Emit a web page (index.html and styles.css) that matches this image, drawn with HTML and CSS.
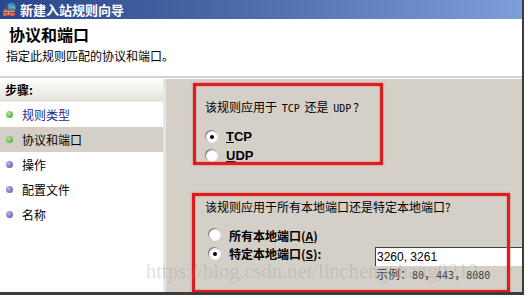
FILE: index.html
```html
<!DOCTYPE html>
<html>
<head>
	<meta charset="UTF-8">
	<title>新建入站规则向导</title>
	<link rel="stylesheet" href="styles.css">
</head>
<body>

<div class="window">

	<div class="titlebar">
		<svg class="appicon" width="15" height="15" viewBox="0 0 15 15">
			<rect x="1" y="7" width="12" height="7" fill="#b0402a"/>
			<path d="M1 9.5h12M1 12h12M4 7v2.5M9 7v2.5M6.5 9.5v2.5M3 12v2M10 12v2" stroke="#e8b090" stroke-width="0.8"/>
			<circle cx="9.5" cy="5" r="4.2" fill="#3a8ad0"/>
			<path d="M6.5 3.5c1.5 0.5 2 2 4 1.5s2 1.5 3 1" stroke="#7cc060" stroke-width="1.4" fill="none"/>
		</svg>
		<span class="title">新建入站规则向导</span>
	</div>

	<div class="header">
		<p class="heading">协议和端口</p>
		<p class="subheading">指定此规则匹配的协议和端口。</p>
	</div>

	<div class="main">

		<div class="steps">
			<div class="stepsTitle">步骤:</div>
			<div class="step"><span class="dot green"></span><span class="link">规则类型</span></div>
			<div class="step current"><span class="dot green"></span>协议和端口</div>
			<div class="step"><span class="dot blue"></span>操作</div>
			<div class="step"><span class="dot blue"></span>配置文件</div>
			<div class="step"><span class="dot blue"></span>名称</div>
		</div>

		<div class="content">

			<p class="question">该规则应用于 <span class="mono">TCP</span> 还是 <span class="mono">UDP</span>?</p>
			<div class="option"><span class="radio checked"></span><b><u>T</u>CP</b></div>
			<div class="option"><span class="radio"></span><b><u>U</u>DP</b></div>

			<p class="question second">该规则应用于所有本地端口还是特定本地端口?</p>
			<div class="option wide"><span class="radio"></span><b>所有本地端口(<u>A</u>)</b></div>
			<div class="option wide portRow">
				<span class="radio checked"></span><b class="portLabel">特定本地端口(<u>S</u>):</b>
				<div class="portField">
					<input type="text" class="portInput" value="3260, 3261">
					<span class="example">示例：<span class="num">80</span>，<span class="num">443</span>，<span class="num">8080</span></span>
				</div>
			</div>

		</div>
	</div>

	<!-- annotation boxes drawn over the dialog -->
	<div class="mark markProto"></div>
	<div class="mark markPort"></div>

	<div class="watermark">https://blog.csdn.net/linchengchang0212</div>
</div>

</body>
</html>
```

FILE: styles.css
```css
body {
	margin: 0;
	background: #ffffff;
	font-family: "Noto Sans CJK SC", "Liberation Sans", sans-serif;
	font-size: 12px;
	color: #000000;
}

p {
	margin: 0;
}

.window {
	position: relative;
	width: 522px;
	height: 292px;
	border-right: 2px solid #3c3c3c;
	border-bottom: 3px solid #3c3c3c;
	overflow: hidden;
	display: flex;
	flex-direction: column;
}

.titlebar {
	height: 19px;
	display: flex;
	align-items: center;
	padding-left: 2px;
	background: linear-gradient(to right, #2a468c, #4a6aa8 45%, #7d9fd8);
	flex: none;
}

.appicon {
	margin-right: 3px;
}

.title {
	color: #ffffff;
	font-weight: bold;
	font-size: 13px;
}

.header {
	height: 57px;
	background: #ffffff;
	border-bottom: 2px solid #d6d3cc;
	flex: none;
	padding-left: 7px;
}

.heading {
	font-size: 16px;
	font-weight: bold;
	margin-top: 4px;
	line-height: 22px;
	padding-left: 2px;
}

.subheading {
	margin-top: 2px;
	line-height: 18px;
	margin-left: -1px;
}

.main {
	flex: 1;
	display: flex;
	border-top: 1px solid #ffffff;
}

.steps {
	width: 163px;
	background: #ffffff;
	border-right: 3px solid #e8e6e0;
	flex: none;
}

.stepsTitle {
	height: 22px;
	line-height: 22px;
	padding-left: 5px;
	font-weight: bold;
	background: linear-gradient(to bottom, #ffffff, #e4e2dc);
	border-bottom: 1px solid #ecebe6;
}

.step {
	height: 25px;
	display: flex;
	align-items: center;
	padding-left: 5px;
}

.step.current {
	background: #d4d0c8;
}

.link {
	color: #1c2a8c;
}

.dot {
	width: 7px;
	height: 7px;
	border-radius: 50%;
	margin-right: 9px;
	margin-left: 1px;
}

.dot.green {
	background: radial-gradient(circle at 35% 35%, #b8e890, #3c9a2c);
}

.dot.blue {
	background: radial-gradient(circle at 35% 35%, #b8b8f0, #4a4aa8);
}

.content {
	flex: 1;
	background: #d4d0c8;
	padding: 18px 0 0 39px;
	display: flex;
	flex-direction: column;
}

.question {
	line-height: 20px;
	margin-bottom: 8px;
}

.question.second {
	margin-top: 32px;
}

.mono {
	font-family: "DejaVu Sans Mono", monospace;
	font-size: 10px;
	padding: 0 2px;
}

.option {
	display: flex;
	align-items: center;
	height: 19px;
	padding-left: 1px;
}

.option b {
	font-family: "Liberation Sans", "Noto Sans CJK SC", sans-serif;
	font-size: 13px;
}

.option.wide {
	height: 20px;
	padding-left: 4px;
}

.wide b {
	font-family: "Noto Sans CJK SC", sans-serif;
	font-size: 12px;
}

.radio {
	width: 10px;
	height: 10px;
	border-radius: 50%;
	background: #ffffff;
	border: 1px solid #f0f0f0;
	box-shadow: -1px -1px 0 #808080;
	margin-right: 8px;
	position: relative;
	flex: none;
}

.radio.checked::after {
	content: "";
	position: absolute;
	left: 3px;
	top: 3px;
	width: 4px;
	height: 4px;
	border-radius: 50%;
	background: #000000;
}

.portRow {
	align-items: flex-start;
	height: 40px;
	margin-top: -1px;
}

.portRow .radio {
	margin-top: 4px;
}

.portLabel {
	line-height: 20px;
	width: 146px;
	flex: none;
}

.portField {
	display: flex;
	flex-direction: column;
	margin-top: 3px;
}

.portInput {
	width: 147px;
	height: 19px;
	box-sizing: border-box;
	border: none;
	border-left: 1px solid #404040;
	border-top: 1px solid #404040;
	padding: 0 1px;
	font-family: "Liberation Sans", sans-serif;
	font-size: 12px;
	background: #ffffff;
	outline: none;
}

.example {
	color: #404040;
	padding-left: 1px;
	line-height: 16px;
}

.num {
	font-family: "DejaVu Sans Mono", monospace;
	font-size: 10px;
}

.mark {
	position: absolute;
	border: 3px solid #d81e1e;
	box-shadow: 0 0 2px #f06a6a, inset 0 0 2px #f06a6a;
	box-sizing: border-box;
}

.markProto {
	left: 193px;
	top: 83px;
	width: 190px;
	height: 82px;
}

.markPort {
	left: 192px;
	top: 193px;
	width: 318px;
	height: 100px;
}

.watermark {
	position: absolute;
	left: 146px;
	top: 259px;
	font-family: "Liberation Serif", serif;
	font-size: 20.5px;
	line-height: 24px;
	color: rgba(150, 150, 150, 0.3);
	white-space: nowrap;
	pointer-events: none;
}
```
